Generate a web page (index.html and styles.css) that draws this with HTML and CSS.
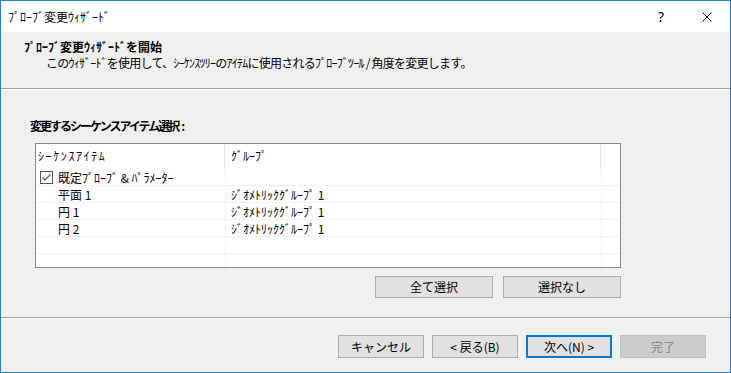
FILE: index.html
```html
<!DOCTYPE html>
<html lang="ja">
<head>
  <meta charset="UTF-8">
  <title>ﾌﾟﾛｰﾌﾞ変更ｳｨｻﾞｰﾄﾞ</title>
  <link rel="stylesheet" href="styles.css">
</head>
<body>
  <div class="window">
    <div class="titlebar">
      <span class="title">ﾌﾟﾛｰﾌﾞ変更ｳｨｻﾞｰﾄﾞ</span>
      <div class="caption-btns">
        <span class="cap help">?</span>
        <span class="cap close">
          <svg width="10" height="10" viewBox="0 0 10 10"><path d="M0.5 0.5 L9.5 9.5 M9.5 0.5 L0.5 9.5" stroke="#000" stroke-width="1" fill="none"/></svg>
        </span>
      </div>
    </div>

    <div class="header">
      <div class="head-title">ﾌﾟﾛｰﾌﾞ変更ｳｨｻﾞｰﾄﾞを開始</div>
      <div class="head-sub">このｳｨｻﾞｰﾄﾞを使用して、ｼｰｹﾝｽﾂﾘｰのｱｲﾃﾑに使用されるﾌﾟﾛｰﾌﾞﾂｰﾙ / 角度を変更します。</div>
    </div>

    <div class="content">
      <div class="section-label">変更するシーケンスアイテム選択<span class="colon">:</span></div>
      <div class="list-wrap">
        <div class="list">
          <div class="list-head">
            <div class="hcol h1">ｼｰｹﾝｽｱｲﾃﾑ</div>
            <div class="hcol h2">ｸﾞﾙｰﾌﾟ</div>
            <div class="hcol h3"></div>
          </div>
          <div class="row">
            <div class="cell c1 group">
              <span class="check">
                <svg width="13" height="13" viewBox="0 0 13 13"><rect x="0.5" y="0.5" width="12" height="12" fill="#fff" stroke="#555"/><path d="M2.5 6.5 L5 9 L10.5 3.5" stroke="#555" stroke-width="1.2" fill="none"/></svg>
              </span>
              既定ﾌﾟﾛｰﾌﾞ &amp; ﾊﾟﾗﾒｰﾀｰ
            </div>
            <div class="cell c2"></div>
            <div class="cell c3"></div>
          </div>
          <div class="row">
            <div class="cell c1">平面 1</div>
            <div class="cell c2">ｼﾞｵﾒﾄﾘｯｸｸﾞﾙｰﾌﾟ 1</div>
            <div class="cell c3"></div>
          </div>
          <div class="row">
            <div class="cell c1">円 1</div>
            <div class="cell c2">ｼﾞｵﾒﾄﾘｯｸｸﾞﾙｰﾌﾟ 1</div>
            <div class="cell c3"></div>
          </div>
          <div class="row">
            <div class="cell c1">円 2</div>
            <div class="cell c2">ｼﾞｵﾒﾄﾘｯｸｸﾞﾙｰﾌﾟ 1</div>
            <div class="cell c3"></div>
          </div>
          <div class="row">
            <div class="cell c1"></div>
            <div class="cell c2"></div>
            <div class="cell c3"></div>
          </div>
          <div class="row">
            <div class="cell c1"></div>
            <div class="cell c2"></div>
            <div class="cell c3"></div>
          </div>
        </div>
        <div class="select-btns">
          <button class="btn wide">全て選択</button>
          <button class="btn wide">選択なし</button>
        </div>
      </div>
    </div>

    <div class="footer">
      <button class="btn">キャンセル</button>
      <button class="btn">&lt; 戻る(B)</button>
      <button class="btn default">次へ(N) &gt;</button>
      <button class="btn disabled">完了</button>
    </div>
  </div>
</body>
</html>
```

FILE: styles.css
```css
body {
  margin: 0;
  padding: 0;
  font-family: "Noto Sans CJK JP", "Noto Sans", sans-serif;
  font-size: 12px;
  color: #000;
  background: #fff;
}
.window {
  width: 731px;
  height: 373px;
  box-sizing: border-box;
  border: 1px solid #1883d7;
  display: flex;
  flex-direction: column;
  background: #f0f0f0;
}
.titlebar {
  height: 31px;
  background: #fff;
  display: flex;
  align-items: center;
  justify-content: space-between;
}
.title {
  padding-left: 7px;
  line-height: 16px;
}
.caption-btns {
  display: flex;
  height: 31px;
}
.cap {
  width: 46px;
  display: flex;
  align-items: center;
  justify-content: center;
}
.help {
  font-size: 14px;
  font-family: "Noto Sans", sans-serif;
}
.header {
  height: 57px;
  box-sizing: border-box;
  padding-top: 7px;
  border-bottom: 1px solid #a0a0a0;
}
.head-title {
  font-weight: bold;
  padding-left: 23px;
  line-height: 16px;
}
.head-sub {
  padding-left: 45px;
  line-height: 16px;
  letter-spacing: -0.75px;
}
.content {
  height: 229px;
  box-sizing: border-box;
  border-top: 1px solid #fff;
  border-bottom: 1px solid #a0a0a0;
  padding-top: 28px;
  padding-left: 29px;
}
.section-label {
  font-weight: bold;
  line-height: 16px;
  letter-spacing: -2px;
}
.colon {
  margin-left: 3px;
  letter-spacing: 0;
}
.list-wrap {
  margin-top: 9px;
  margin-left: 5px;
  width: 586px;
}
.list {
  height: 125px;
  box-sizing: border-box;
  border: 1px solid #828790;
  background: #fff;
  overflow: hidden;
}
.list-head {
  display: flex;
  height: 25px;
}
.hcol {
  box-sizing: border-box;
  line-height: 22px;
  padding-top: 1px;
}
.h1 {
  width: 189px;
  padding-left: 2px;
  border-right: 1px solid #e5e5e5;
  letter-spacing: 1.6px;
}
.h2 {
  width: 376px;
  padding-left: 6px;
  border-right: 1px solid #e5e5e5;
}
.h3 {
  flex: 1;
}
.row {
  display: flex;
  height: 17px;
  box-sizing: border-box;
  border-bottom: 1px solid #f0f0f0;
}
.cell {
  box-sizing: border-box;
  line-height: 15px;
  padding-top: 1px;
  white-space: nowrap;
}
.c1 {
  width: 190px;
  padding-left: 22px;
  border-right: 1px solid #f0f0f0;
}
.c1.group {
  padding-left: 4px;
  display: flex;
  align-items: center;
  padding-top: 0;
}
.check {
  display: inline-flex;
  margin-right: 5px;
}
.c2 {
  width: 376px;
  padding-left: 5px;
  border-right: 1px solid #f0f0f0;
}
.c3 {
  flex: 1;
}
.select-btns {
  display: flex;
  justify-content: flex-end;
  gap: 10px;
  margin-top: 8px;
}
.btn {
  font-family: "Noto Sans CJK JP", "Noto Sans", sans-serif;
  font-size: 12px;
  color: #000;
  width: 86px;
  height: 23px;
  box-sizing: border-box;
  background: #e1e1e1;
  border: 1px solid #adadad;
  padding: 0;
  line-height: 20px;
}
.btn.wide {
  width: 118px;
  height: 22px;
}
.btn.default {
  border: 2px solid #0078d7;
}
.btn.disabled {
  background: #cccccc;
  border-color: #bfbfbf;
  color: #838383;
}
.footer {
  flex: 1;
  border-top: 1px solid #fff;
  display: flex;
  justify-content: flex-end;
  gap: 8px;
  padding-top: 16px;
  padding-right: 24px;
}
```
